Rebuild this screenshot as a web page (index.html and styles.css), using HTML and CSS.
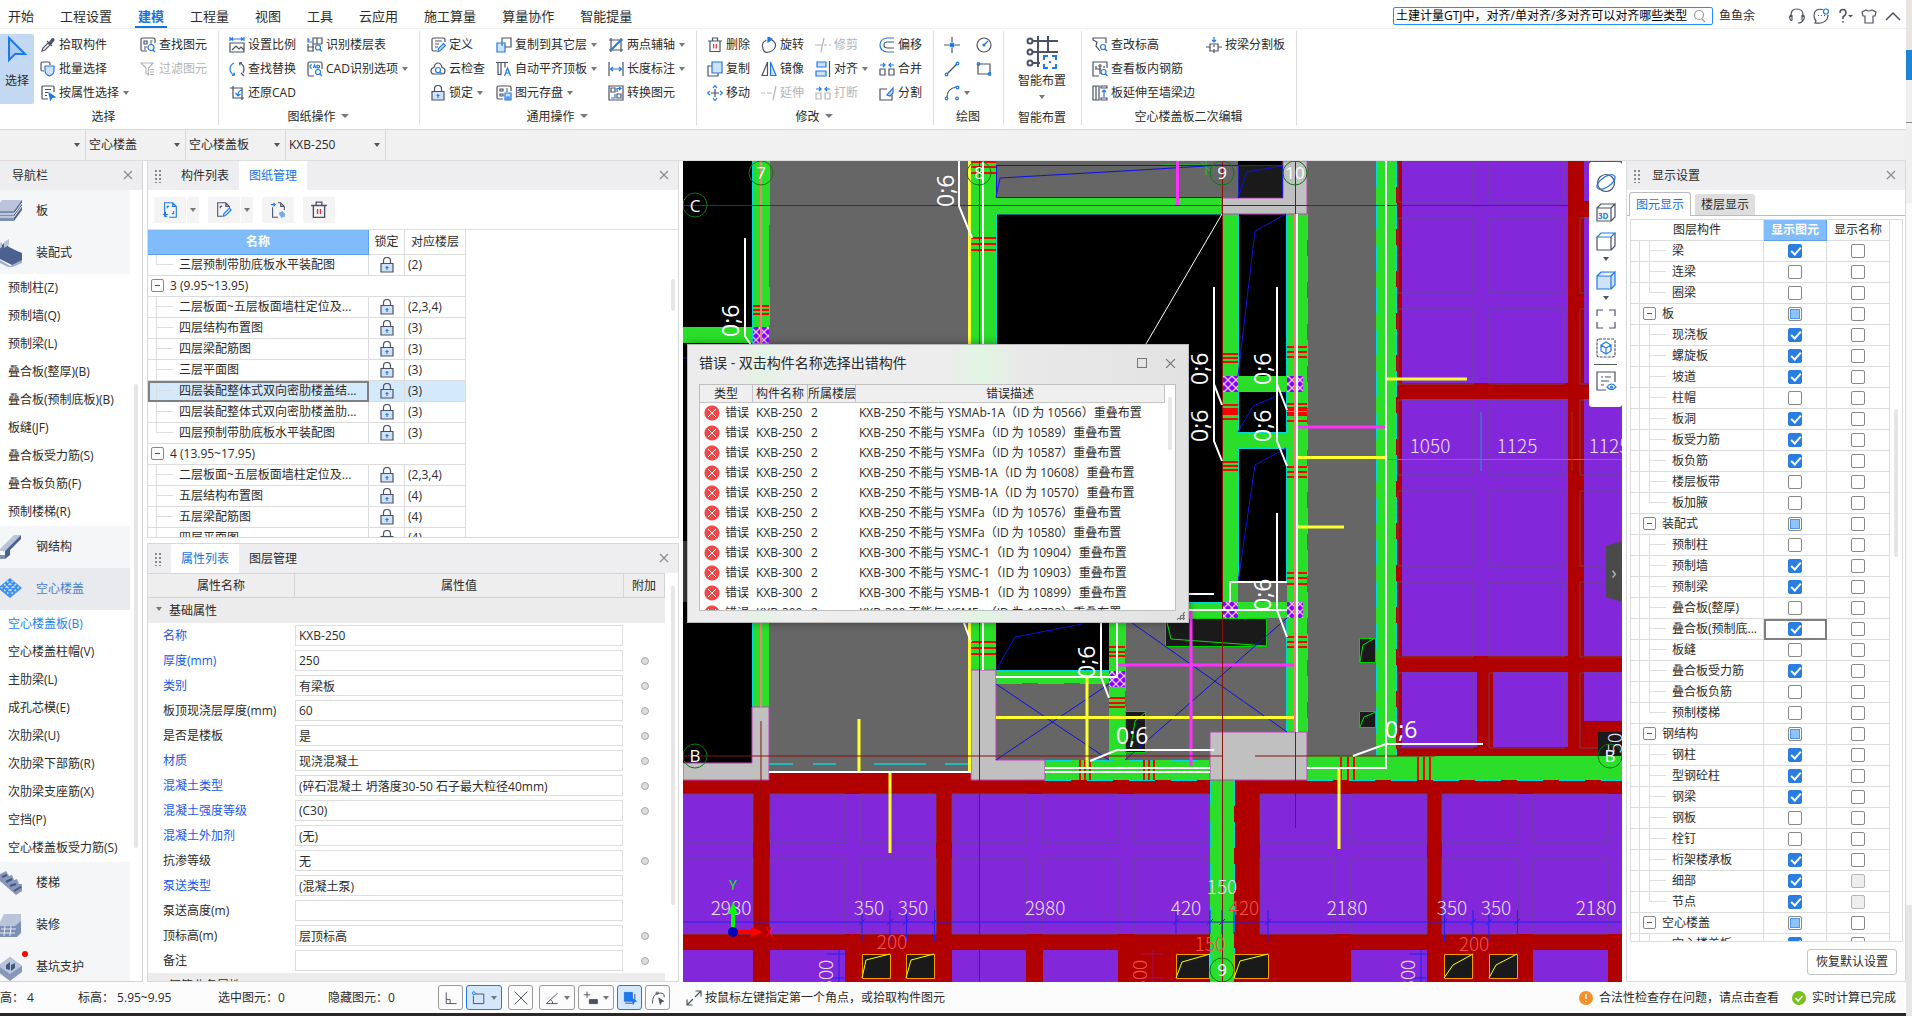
FILE: index.html
```html
<!DOCTYPE html>
<html lang="zh-CN">
<head>
<meta charset="utf-8">
<title>建模</title>
<link rel="stylesheet" href="styles.css">
</head>
<body>
<svg class="defs" aria-hidden="true">
<symbol id="pick" viewBox="0 0 16 16"><path d="M2 14l1-3 5-5 2 2-5 5z"/><path d="M7 4l5 5M9 6l3-4q2-1 2 1l-3 4z" fill="#4b5266"/></symbol>
<symbol id="batch" viewBox="0 0 16 16"><path d="M4 10H2.500Q1 10 1 8.500v-6Q1 1 2.500 1h6Q10 1 10 2.500V4"/><path class="f" d="M5 5h9v5q0 3-4.500 5Q5 13 5 10z"/></symbol>
<symbol id="attr" viewBox="0 0 16 16"><path d="M8 14H3q-1 0-1-1V2q0-1 1-1h10q1 0 1 1v5M5 4.500h6M5 7.500h3M5 10.500h2"/><path class="s" d="M9 8l6 4-3 .500L10.500 15z"/></symbol>
<symbol id="find" viewBox="0 0 16 16"><path d="M7 14H2.500Q1 14 1 12.500v-10Q1 1 2.500 1h11Q15 1 15 2.500V6M4 4h3v3H4zM10 4h2.500M10 6h2M4 10h3M4 12h2"/><circle class="b" cx="11" cy="10.500" r="3"/><path class="b" d="M13 13l2 2"/></symbol>
<symbol id="filter" viewBox="0 0 16 16"><path d="M1 2h12L8.500 7v7L6 12V7zM10 8.500h4M10 11h4M10 13.500h4"/></symbol>
<symbol id="scale" viewBox="0 0 16 16"><path d="M1 6h14v9H1zM3 13l4-4 3 3 2-2 3 3"/><path class="b" d="M1 0v4M15 0v4M2 2h12M4 .500L2 2l2 1.500M12 .500L14 2l-2 1.500"/></symbol>
<symbol id="floors" viewBox="0 0 16 16"><path d="M6 3V1h9v6M6 3v4h9M1 7v7h6M1 10h6M6 7v7M10 1v6"/><path class="b" d="M1 1v4h4M1 3h2"/><circle class="b" cx="11" cy="10.500" r="2.500"/><path class="b" d="M13 12.500l2 2"/></symbol>
<symbol id="swap" viewBox="0 0 16 16"><path class="b" d="M5 14Q1 12 1 8t4-6M3 14.500l2.500-.500L5 11.500"/><path d="M11 2q4 2 4 6 0 2-1 4M13 1.500L10.500 2l.500 2.500M12 12l3 3"/></symbol>
<symbol id="cad" viewBox="0 0 16 16"><path d="M7 15H2.500Q1 15 1 13.500v-11Q1 1 2.500 1h11Q15 1 15 2.500V8"/><path class="b" d="M5 4Q3 3.500 3 5.500T5 7M6.500 7l1-3 1.200 3M10 4v3q3 0 2.500-1.500Q12.500 4 10 4"/><circle class="b" cx="11" cy="11" r="2.500"/><path class="b" d="M13 13l2 2"/></symbol>
<symbol id="restore" viewBox="0 0 16 16"><path d="M1 3h12v12M4 1v12h11"/><path class="b" d="M14 5q-5 0-5 5M6.500 8L9 11l2.500-2"/></symbol>
<symbol id="define" viewBox="0 0 16 16"><path d="M7 14H3.500Q2 14 2 12.500v-10Q2 1 3.500 1h10Q15 1 15 2.500V5M5 4h7M5 7h4M5 10h3"/><path class="f" d="M8 14.500l.500-3 5-5 2 2-5 5z"/></symbol>
<symbol id="cloud" viewBox="0 0 16 16"><path d="M4 13Q1 13 1 10t3-3.500Q5 2 8 2t4 4.500q3 .500 3 3.500t-3 3z"/><circle class="b" cx="8" cy="9" r="2.500"/><path class="b" d="M10 11l1.500 1.500"/></symbol>
<symbol id="lock" viewBox="0 0 16 16"><path class="l" d="M2 6.500h12v8.500H2z"/><path d="M4.500 6.500V4q0-3.500 3.500-3.500t3.500 3.500v2.500"/><path class="b" d="M8 13V9M6.500 10.500h3"/></symbol>
<symbol id="copyfloor" viewBox="0 0 16 16"><path class="f" d="M1 6h8v9H1z"/><path d="M6 5V1h9v9H9"/><path class="b" d="M6 5v4"/></symbol>
<symbol id="align" viewBox="0 0 16 16"><path d="M0 1.500h12M2 1.500v12h3v-12M9 1.500v5"/><path class="b" d="M8.500 15l3-8 3 8M9.500 12h4"/></symbol>
<symbol id="save" viewBox="0 0 16 16"><path d="M7 14H2.500Q1 14 1 12.500v-10Q1 1 2.500 1h11Q15 1 15 2.500V6M4 4h3v2H4zM10 4h2M10 6h2M4 9h3v2H4z"/><path class="f" d="M9 8h6v7H9zM11 15v-3h2v3"/></symbol>
<symbol id="axis2" viewBox="0 0 16 16"><path d="M1 3h14M1 13h14M3 1v14M13 1v14"/><path class="b" d="M2.500 13.500L13.500 2.500" stroke-width="2"/></symbol>
<symbol id="length" viewBox="0 0 16 16"><path d="M1 1v14M15 1v14"/><path class="b" d="M2 8h12M5 6L2.500 8 5 10M11 6l2.500 2L11 10"/></symbol>
<symbol id="convert" viewBox="0 0 16 16"><path d="M1 1h14v14H1zM3 3h4v4H3zM9 9h4v4H9z"/><path class="b" d="M9 7V3.500h4M7 9v4H3M11 2l2 1.500L11 5"/></symbol>
<symbol id="trash" viewBox="0 0 16 16"><path d="M1 4h14M3 4v10.500h10V4M5.500 4V1h5v3"/><path d="M6.700 7v4.500M9.300 7v4.500" stroke="#d33"/></symbol>
<symbol id="rotate" viewBox="0 0 16 16"><path d="M10.500 3Q15 5 14.500 9T8 15 1.500 9Q1 5 5.500 3"/><path class="s" d="M7 0l4 2-4 3z"/></symbol>
<symbol id="trim" viewBox="0 0 16 16"><path d="M0 8h7M9 8h3M14 8h2M9 1L6 15"/></symbol>
<symbol id="offset" viewBox="0 0 16 16"><path class="b" d="M15 1H8Q1 2 1 8t7 7h7"/><path d="M15 5H8.500Q5 5 5 8t3.500 3H15"/></symbol>
<symbol id="copy" viewBox="0 0 16 16"><path d="M5 5H1v10h10v-3"/><path class="f" d="M5 1h10v11H5z"/></symbol>
<symbol id="mirror" viewBox="0 0 16 16"><path d="M6.500 1v13.500H1z"/><path class="f" d="M9.500 1v13.500H15z"/></symbol>
<symbol id="alignr" viewBox="0 0 16 16"><path class="f" d="M2 1h9v5H2zM1 10h10v5H1z"/><path d="M14.500 0v16"/></symbol>
<symbol id="merge" viewBox="0 0 16 16"><path d="M1 8h5v6H1zM10 8h5v6h-5z"/><path class="b" d="M1 4h5M4 2l2 2-2 2M15 4h-5M12 2l-2 2 2 2"/></symbol>
<symbol id="move" viewBox="0 0 16 16"><path d="M8 4v8M4 8h8"/><path class="b" d="M6 3l2-2.500L10 3M6 13l2 2.500 2-2.500M3 6L.500 8 3 10M13 6l2.500 2L13 10"/></symbol>
<symbol id="extend" viewBox="0 0 16 16"><path d="M0 8h4M6 8h5M15 1l-3 14"/></symbol>
<symbol id="split" viewBox="0 0 16 16"><path d="M8 4H1v11h12v-5"/><path class="f" d="M8 10l6-7v5l-3 3z"/></symbol>
<symbol id="point" viewBox="0 0 16 16"><path d="M8 0v5M8 11v5M0 8h5M11 8h5"/><circle class="s" cx="8" cy="8" r="2"/></symbol>
<symbol id="circle" viewBox="0 0 16 16"><circle cx="8" cy="8" r="7"/><path class="b" d="M8 8l4-4"/><circle class="s" cx="8" cy="8" r="1"/></symbol>
<symbol id="line" viewBox="0 0 16 16"><path d="M3 13L13 3"/><circle class="b" cx="2.500" cy="13.500" r="1.300"/><circle class="b" cx="13.500" cy="2.500" r="1.300"/></symbol>
<symbol id="rect" viewBox="0 0 16 16"><path d="M2 3h12v10H2z"/><circle class="b" cx="2.500" cy="3" r="1.300"/><circle class="b" cx="13.500" cy="13" r="1.300"/></symbol>
<symbol id="arc" viewBox="0 0 16 16"><path d="M3 12Q3 4 12 2"/><circle class="b" cx="2.500" cy="13.500" r="1.300"/><circle class="b" cx="13.500" cy="2.500" r="1.300"/><circle class="b" cx="13" cy="13.500" r="1.300"/></symbol>
<symbol id="elev" viewBox="0 0 16 16"><path d="M8 14L4 9 5 5 1 3V1h13v5"/><circle class="b" cx="11" cy="10" r="2.500"/><path class="b" d="M13 12l2 2"/></symbol>
<symbol id="rebar" viewBox="0 0 16 16"><path d="M7 15H1V1h14v6M8 3v10M3 8h6M4 5v3M12 5v2M6 5h4"/><circle class="b" cx="11.500" cy="11" r="2.500"/><path class="b" d="M13.500 13l2 2"/></symbol>
<symbol id="wall" viewBox="0 0 16 16"><path d="M1 1h3v14H1zM4 1h3v14H4zM9 1h6v2H9zM9 13h6v2H9z"/><path class="b" d="M12 12V5M10 7l2-2 2 2"/></symbol>
<symbol id="beamcut" viewBox="0 0 16 16"><path d="M4 7h8v7H4zM0 10h4M12 10h4M8 8v2M8 12v4"/><path class="b" d="M8 0v5M6 3l2 2 2-2"/></symbol>
<symbol id="file1" viewBox="0 0 20 20"><path class="b" d="M7 17H4V2h9l4 4v12H9M13 2v4h4"/><path class="b" d="M7 8V6h2M12 6h2M14 11v3h-2M5 12v6M2 15h6"/></symbol>
<symbol id="file2" viewBox="0 0 20 20"><path d="M8 17H3V2h9l4 4v2M12 2v4h4M6 8V6h2"/><path class="f" d="M9 17l1-3 6-6 2 2-6 6z"/></symbol>
<symbol id="file3" viewBox="0 0 20 20"><path d="M4 7v11h6M10 2h3l4 4v4M13 2v4h4"/><path class="b" d="M2 4h5M5 2l2 2-2 2"/><path class="s" d="M12 13l3-1 2 2v3l-3 1-2-3z" opacity=".6"/></symbol>
<symbol id="close" viewBox="0 0 10 10"><path d="M1 1l8 8M9 1L1 9"/></symbol>
<symbol id="cube" viewBox="0 0 20 20"><path class="k" d="M1 6h14v13H1zM15 6l4-4v13l-4 4M1 6l4-4h14"/></symbol>
</svg>

<div class="app">
<header class="menubar">
<nav class="menus"><a href="#">开始</a><a href="#">工程设置</a><a href="#" class="on">建模</a><a href="#">工程量</a><a href="#">视图</a><a href="#">工具</a><a href="#">云应用</a><a href="#">施工算量</a><a href="#">算量协作</a><a href="#">智能提量</a></nav>
<div class="search"><input type="text" aria-label="搜索" value="土建计量GTJ中，对齐/单对齐/多对齐可以对齐哪些类型"><svg class="i grey" viewBox="0 0 16 16"><circle cx="7" cy="7" r="4.500"/><path d="M10 11l3 3"/></svg></div>
<a href="#" class="user">鱼鱼余</a>
<div class="tools">
<button aria-label="客服"><svg class="i" viewBox="0 0 16 16"><path d="M2 9V7q0-6 6-6t6 6v2M2 7q-2 1-1 4 1 2 2 1V7M14 7q2 1 1 4-1 2-2 1V7M14 12q-1 3-5 3"/></svg></button>
<button aria-label="消息"><svg class="i" viewBox="0 0 16 16"><path d="M10 1.500Q1 0 1 7.500 1 11 3 13l-1 2q9 1 12-4 1-2 1-4M5 7.500h1M8 7.500h1M11 7.500h1"/><circle class="b" cx="13" cy="3.500" r="2.500"/></svg></button>
<button aria-label="帮助"><svg class="i" viewBox="0 0 16 16"><path d="M3 5q0-3.500 3-3.500T9 5Q9 7 6 9v2M6 13v1.500" stroke-width="1.600"/><path d="M11 7h5l-2.500 2.500z" fill="#4b5266" stroke="none"/></svg></button>
<button aria-label="皮肤"><svg class="i" viewBox="0 0 16 16"><path d="M5 2q3 2 6 0l4 2-1 4h-2v7H4V8H2L1 4z"/></svg></button>
<button aria-label="收起"><svg class="i" viewBox="0 0 16 16"><path d="M1 12l7-7 7 7" stroke-width="1.500"/></svg></button>
</div>
</header>

<section class="ribbon">
<div class="group first"><div class="cols"><button class="big on"><svg viewBox="0 0 24 28"><path d="M4 2v22l6-6h10z" fill="#a9cbf4" stroke="#1f78e8" stroke-width="2"/></svg>选择</button>
<div class="col"><button><svg class="i"><use href="#pick"/></svg>拾取构件</button><button><svg class="i"><use href="#batch"/></svg>批量选择</button><button><svg class="i"><use href="#attr"/></svg>按属性选择<i class="dd"></i></button></div>
<div class="col"><button><svg class="i"><use href="#find"/></svg>查找图元</button><button class="off"><svg class="i"><use href="#filter"/></svg>过滤图元</button></div></div><h2>选择</h2></div>
<div class="group"><div class="cols">
<div class="col"><button><svg class="i"><use href="#scale"/></svg>设置比例</button><button><svg class="i"><use href="#swap"/></svg>查找替换</button><button><svg class="i"><use href="#restore"/></svg>还原CAD</button></div>
<div class="col"><button><svg class="i"><use href="#floors"/></svg>识别楼层表</button><button><svg class="i"><use href="#cad"/></svg>CAD识别选项<i class="dd"></i></button></div></div><h2>图纸操作<i class="dd"></i></h2></div>
<div class="group"><div class="cols">
<div class="col"><button><svg class="i"><use href="#define"/></svg>定义</button><button><svg class="i"><use href="#cloud"/></svg>云检查</button><button><svg class="i"><use href="#lock"/></svg>锁定<i class="dd"></i></button></div>
<div class="col"><button><svg class="i"><use href="#copyfloor"/></svg>复制到其它层<i class="dd"></i></button><button><svg class="i"><use href="#align"/></svg>自动平齐顶板<i class="dd"></i></button><button><svg class="i"><use href="#save"/></svg>图元存盘<i class="dd"></i></button></div>
<div class="col"><button><svg class="i"><use href="#axis2"/></svg>两点辅轴<i class="dd"></i></button><button><svg class="i"><use href="#length"/></svg>长度标注<i class="dd"></i></button><button><svg class="i"><use href="#convert"/></svg>转换图元</button></div></div><h2>通用操作<i class="dd"></i></h2></div>
<div class="group"><div class="cols">
<div class="col"><button><svg class="i"><use href="#trash"/></svg>删除</button><button><svg class="i"><use href="#copy"/></svg>复制</button><button><svg class="i"><use href="#move"/></svg>移动</button></div>
<div class="col"><button><svg class="i"><use href="#rotate"/></svg>旋转</button><button><svg class="i"><use href="#mirror"/></svg>镜像</button><button class="off"><svg class="i"><use href="#extend"/></svg>延伸</button></div>
<div class="col"><button class="off"><svg class="i"><use href="#trim"/></svg>修剪</button><button><svg class="i"><use href="#alignr"/></svg>对齐<i class="dd"></i></button><button class="off"><svg class="i"><use href="#merge"/></svg>打断</button></div>
<div class="col"><button><svg class="i"><use href="#offset"/></svg>偏移</button><button><svg class="i"><use href="#merge"/></svg>合并</button><button><svg class="i"><use href="#split"/></svg>分割</button></div></div><h2>修改<i class="dd"></i></h2></div>
<div class="group draw"><div class="cols">
<div class="col"><button aria-label="点"><svg class="i"><use href="#point"/></svg></button><button aria-label="直线"><svg class="i"><use href="#line"/></svg></button><button aria-label="弧"><svg class="i"><use href="#arc"/></svg><i class="dd"></i></button></div>
<div class="col"><button aria-label="圆"><svg class="i"><use href="#circle"/></svg></button><button aria-label="矩形"><svg class="i"><use href="#rect"/></svg></button></div></div><h2>绘图</h2></div>
<div class="group smart"><div class="cols"><button class="big"><svg viewBox="0 0 32 34"><g fill="none" stroke="#4b5266" stroke-width="2"><path d="M5 6h27M5 17h27M5 28h9M12 1v31M22 1v16"/><circle cx="4" cy="6" r="2.500" fill="#fff"/><circle cx="4" cy="17" r="2.500" fill="#fff"/><circle cx="4" cy="28" r="2.500" fill="#fff"/><path d="M18 25v-4h4m4 0h4v4m0 4v4h-4m-4 0h-4v-4M23 27h2" stroke="#1f78e8"/></g></svg>智能布置<i class="dd"></i></button></div><h2>智能布置</h2></div>
<div class="group"><div class="cols">
<div class="col"><button><svg class="i"><use href="#elev"/></svg>查改标高</button><button><svg class="i"><use href="#rebar"/></svg>查看板内钢筋</button><button><svg class="i"><use href="#wall"/></svg>板延伸至墙梁边</button></div>
<div class="col"><button><svg class="i"><use href="#beamcut"/></svg>按梁分割板</button></div></div><h2>空心楼盖板二次编辑</h2></div>
</section>

<section class="pickers">
<div class="pick short"><select aria-label="楼层"><option></option></select></div>
<div class="pick"><select aria-label="构件类别"><option>空心楼盖</option></select></div>
<div class="pick"><select aria-label="构件类型"><option>空心楼盖板</option></select></div>
<div class="pick"><select aria-label="构件"><option>KXB-250</option></select></div>
</section>

<main class="work">
<aside class="nav">
<div class="bar"><span class="ttl">导航栏</span><button class="x" aria-label="关闭导航栏"><svg class="i"><use href="#close"/></svg></button></div>
<div class="navlist">
<a href="#" class="cat"><svg viewBox="0 0 24 28"><path d="M-6 14L2 3h20l-8 11z" fill="#b9c3da"/><path d="M-6 14h20v10H-6z" fill="#7d8fb5"/><path d="M14 14l8-11v10l-8 11z" fill="#4c618f"/><path d="M-6 17h20l8-11M-6 20h20l8-11" fill="none" stroke="#fff"/></svg>板</a>
<a href="#" class="cat"><svg viewBox="0 0 24 28"><path d="M0 8l4-4 5 4 8 4 5 2v8l-8 5-14-7z" fill="#4c618f"/><path d="M-2 6l4-3v5l-4 3zM4 3l5-3v6l-5 3z" fill="#b9c3da"/><path d="M0 21l10 6 12-6v3l-12 5-10-5z" fill="#9fb0cf"/></svg>装配式</a>
<a href="#">预制柱(Z)</a><a href="#">预制墙(Q)</a><a href="#">预制梁(L)</a><a href="#">叠合板(整厚)(B)</a><a href="#">叠合板(预制底板)(B)</a><a href="#">板缝(JF)</a><a href="#">叠合板受力筋(S)</a><a href="#">叠合板负筋(F)</a><a href="#">预制楼梯(R)</a>
<a href="#" class="cat"><svg viewBox="0 0 24 28"><path d="M-2 18L14 2h7L5 18z" fill="#b9c3da"/><path d="M5 18L21 2v4L10 17v5l-5 4z" fill="#4c618f"/><path d="M-2 22h7v4h-7z" fill="#7d8fb5"/></svg>钢结构</a>
<a href="#" class="cat on"><svg viewBox="0 0 24 28"><path d="M10 3l12 10-12 10L-2 13z" fill="#3f8fee"/><path d="M4 9l9 8M7 6l9 8M1 12l9 8M16 9l-9 8M13 6l-9 8M19 12l-9 8" stroke="#bfe0ff" stroke-width="1.500" stroke-dasharray="2 2"/></svg>空心楼盖</a>
<a href="#" class="sel">空心楼盖板(B)</a><a href="#">空心楼盖柱帽(V)</a><a href="#">主肋梁(L)</a><a href="#">成孔芯模(E)</a><a href="#">次肋梁(U)</a><a href="#">次肋梁下部筋(R)</a><a href="#">次肋梁支座筋(X)</a><a href="#">空挡(P)</a><a href="#">空心楼盖板受力筋(S)</a>
<a href="#" class="cat"><svg viewBox="0 0 24 28"><path d="M0 5l6-3 3 5 3-1 2 5 3-1 2 5 3 0v7l-6 4L0 12z" fill="#8797ba"/><path d="M2 8l5-2M6 13l6-3M10 17l6-2M14 22l7-4" stroke="#44587f" stroke-width="2"/></svg>楼梯</a>
<a href="#" class="cat"><svg viewBox="0 0 24 28"><path d="M4 3h17v12H-2z" fill="#b9c3da"/><path d="M-2 15h17l6-5v12l-4 4H-2z" fill="#7d8fb5"/><path d="M1 18h15M0 22h15M5 15l-1 10M11 15l-1 10" stroke="#e6ebf5"/></svg>装修</a>
<a href="#" class="cat dot"><svg viewBox="0 0 24 28"><path d="M10 4l12 9v6l-12 9-12-9v-6z" fill="#8797ba"/><path d="M10 4l12 9-12 8-12-8z" fill="#b9c3da"/><path d="M6 16v-4l4-3v8zM11 18v-6l4-2v5z" fill="#44587f"/></svg>基坑支护</a>
<i class="thumb"></i></div>
</aside>

<div class="mid">
<section class="panel drawings">
<div class="bar"><i class="grip"></i><div class="tabs"><button>构件列表</button><button class="on">图纸管理</button></div><button class="x" aria-label="关闭"><svg class="i"><use href="#close"/></svg></button></div>
<div class="tbar"><span class="duo"><button aria-label="添加图纸"><svg class="i"><use href="#file1"/></svg></button><button class="a" aria-label="更多添加"><i class="dd"></i></button></span><span class="duo"><button aria-label="编辑图纸"><svg class="i"><use href="#file2"/></svg></button><button class="a" aria-label="更多编辑"><i class="dd"></i></button></span><button aria-label="定位图纸"><svg class="i"><use href="#file3"/></svg></button><button aria-label="删除图纸"><svg class="i"><use href="#trash"/></svg></button></div>
<div class="clip"><table class="grid dwg"><colgroup><col class="w221"><col class="w36"><col class="w61"></colgroup>
<thead><tr><th class="hot">名称</th><th>锁定</th><th>对应楼层</th></tr></thead><tbody>
<tr><td class="c last">三层预制带肋底板水平装配图</td><td class="k"><svg class="i"><use href="#lock"/></svg></td><td>(2)</td></tr>
<tr><td colspan="3" class="p"><i class="fold"></i>3 (9.95~13.95)</td></tr>
<tr><td class="c">二层板面~五层板面墙柱定位及...</td><td class="k"><svg class="i"><use href="#lock"/></svg></td><td>(2,3,4)</td></tr>
<tr><td class="c">四层结构布置图</td><td class="k"><svg class="i"><use href="#lock"/></svg></td><td>(3)</td></tr>
<tr><td class="c">四层梁配筋图</td><td class="k"><svg class="i"><use href="#lock"/></svg></td><td>(3)</td></tr>
<tr><td class="c">三层平面图</td><td class="k"><svg class="i"><use href="#lock"/></svg></td><td>(3)</td></tr>
<tr class="sel"><td class="c">四层装配整体式双向密肋楼盖结...</td><td class="k"><svg class="i"><use href="#lock"/></svg></td><td>(3)</td></tr>
<tr><td class="c">四层装配整体式双向密肋楼盖肋...</td><td class="k"><svg class="i"><use href="#lock"/></svg></td><td>(3)</td></tr>
<tr><td class="c last">四层预制带肋底板水平装配图</td><td class="k"><svg class="i"><use href="#lock"/></svg></td><td>(3)</td></tr>
<tr><td colspan="3" class="p"><i class="fold"></i>4 (13.95~17.95)</td></tr>
<tr><td class="c">二层板面~五层板面墙柱定位及...</td><td class="k"><svg class="i"><use href="#lock"/></svg></td><td>(2,3,4)</td></tr>
<tr><td class="c">五层结构布置图</td><td class="k"><svg class="i"><use href="#lock"/></svg></td><td>(4)</td></tr>
<tr><td class="c">五层梁配筋图</td><td class="k"><svg class="i"><use href="#lock"/></svg></td><td>(4)</td></tr>
<tr><td class="c">四层平面图</td><td class="k"><svg class="i"><use href="#lock"/></svg></td><td>(4)</td></tr>
</tbody></table><i class="thumb"></i></div>
</section>

<section class="panel props">
<div class="bar"><i class="grip"></i><div class="tabs"><button class="on">属性列表</button><button>图层管理</button></div><button class="x" aria-label="关闭"><svg class="i"><use href="#close"/></svg></button></div>
<div class="clip"><table class="prop"><colgroup><col class="w147"><col class="w329"><col class="w41"></colgroup>
<thead><tr><th>属性名称</th><th>属性值</th><th>附加</th></tr></thead><tbody>
<tr class="sec"><td colspan="3"><i class="dd"></i>基础属性</td></tr>
<tr><td class="b"><label for="p1">名称</label></td><td><input id="p1" value="KXB-250"></td><td></td></tr>
<tr><td class="b"><label for="p2">厚度(mm)</label></td><td><input id="p2" value="250"></td><td><i class="o"></i></td></tr>
<tr><td class="b"><label for="p3">类别</label></td><td><input id="p3" value="有梁板"></td><td><i class="o"></i></td></tr>
<tr><td><label for="p4">板顶现浇层厚度(mm)</label></td><td><input id="p4" value="60"></td><td><i class="o"></i></td></tr>
<tr><td><label for="p5">是否是楼板</label></td><td><input id="p5" value="是"></td><td><i class="o"></i></td></tr>
<tr><td class="b"><label for="p6">材质</label></td><td><input id="p6" value="现浇混凝土"></td><td><i class="o"></i></td></tr>
<tr><td class="b"><label for="p7">混凝土类型</label></td><td><input id="p7" value="(碎石混凝土 坍落度30-50 石子最大粒径40mm)"></td><td><i class="o"></i></td></tr>
<tr><td class="b"><label for="p8">混凝土强度等级</label></td><td><input id="p8" value="(C30)"></td><td><i class="o"></i></td></tr>
<tr><td class="b"><label for="p9">混凝土外加剂</label></td><td><input id="p9" value="(无)"></td><td></td></tr>
<tr><td><label for="p10">抗渗等级</label></td><td><input id="p10" value="无"></td><td><i class="o"></i></td></tr>
<tr><td class="b"><label for="p11">泵送类型</label></td><td><input id="p11" value="(混凝土泵)"></td><td></td></tr>
<tr><td><label for="p12">泵送高度(m)</label></td><td><input id="p12" value=""></td><td></td></tr>
<tr><td><label for="p13">顶标高(m)</label></td><td><input id="p13" value="层顶标高"></td><td><i class="o"></i></td></tr>
<tr><td><label for="p14">备注</label></td><td><input id="p14" value=""></td><td><i class="o"></i></td></tr>
<tr class="sec"><td colspan="3"><i class="dd"></i>钢筋业务属性</td></tr>
</tbody></table><i class="thumb"></i></div>
</section>
</div>

<section class="canvas">
<svg class="plan" viewBox="683 161 939 821" preserveAspectRatio="xMinYMin slice">
<defs><pattern id="hatch" width="8" height="8" patternUnits="userSpaceOnUse"><path d="M0 0h8v8H0z" fill="#8b00ff"/><path d="M0 0l8 8M8 0L0 8" stroke="#e3c8f5" stroke-width="1.300"/></pattern></defs>
<rect x="683" y="161" width="939" height="821"/>
<path fill="#666" d="M769 161h202v611H769zM996 161h242v37H996zM1307 161h69v595h-69zM996 683h113v77H996zM1125 618h162v142h-162zM1238 582h49v20h-49z"/>
<path fill="#3b3b3b" d="M683 541h6v61h-6z"/>
<path fill="#b00000" d="M683 780h939v202H683zM769 773h202v8H769zM1396 161h226v595h-226z"/>
<path fill="#8228da" d="M1402 161h166v222h-166zM1584 161h38v40h-38zM1584 217h38v166h-38zM1402 399h166v257h-166zM1584 399h38v257h-38zM1402 672h75v75h-75zM1493 672h75v75h-75zM1584 672h38v49h-38z
M683 794h70v140h-70zM770 794h166v140H770zM952 794h258v140H952zM1260 794h167v140h-167zM1442 794h180v140h-180zM683 950h70v32h-70zM770 950h75v32h-75zM952 950h74v32h-74zM1043 950h75v32h-75zM1351 950h76v32h-76zM1533 950h75v32h-75z"/>
<path class="cell" d="M1398 140h75v62h-75zM1489 140h75v62h-75zM1398 218h75v75h-75zM1489 218h75v75h-75zM1580 218h60v75h-60zM1398 309h75v75h-75zM1489 309h75v75h-75zM1580 309h60v75h-60zM1398 400h75v75h-75zM1489 400h75v75h-75zM1580 400h60v75h-60zM1398 491h75v75h-75zM1489 491h75v75h-75zM1580 491h60v75h-60zM1398 582h75v75h-75zM1489 582h75v75h-75zM1580 582h60v75h-60zM1398 673h75v75h-75zM1489 673h75v75h-75zM1580 673h60v75h-60z
M670 794h83v49h-83zM770 794h75v49h-75zM860 794h76v49h-76zM952 794h75v49h-75zM1042 794h76v49h-76zM1134 794h75v49h-75zM1260 794h75v49h-75zM1351 794h76v49h-76zM1442 794h76v49h-76zM1533 794h75v49h-75z
M670 858h83v76h-83zM770 858h75v76h-75zM860 858h76v76h-76zM952 858h75v76h-75zM1042 858h76v76h-76zM1134 858h75v76h-75zM1260 858h75v76h-75zM1351 858h76v76h-76zM1442 858h76v76h-76zM1533 858h75v76h-75z"/>
<g fill="#2ade2a"><path d="M752 161h17v546h-17zM683 327h70v16h-70zM971 161h25v509h-25zM996 198h226v16H996zM1222 214h16v388h-16zM1238 376h49v16h-49zM1238 432h49v16h-49zM1287 214h20v518h-20zM1376 161h20v595h-20zM1188 602h99v16h-99zM996 670h113v13H996zM1109 618h16v142h-16zM1045 760h165v20h-165zM1307 756h315v24h-315zM1210 780h24v202h-24z"/></g>
<path class="cy" d="M752.500 161v546M769.500 161v64M769.500 287v38M683 327.500h70M996.500 214v131M996 214h226M1238.500 214v162M1286.500 214v162M1238 391.500h49M1238.500 392v40M1286.500 392v40M1238 432.500h49M1238 448.500h49M1238.500 448v134M1286.500 448v134M1188 602.500h34M996 670.500h113M1286.500 618v114"/>
<path class="cy" stroke-dasharray="26 16" d="M971.500 161v184M1307.500 214v518M1376.500 161v595M1396.500 161v595M996 683.500h113M1109.500 683v77M1125.500 623v137M1045 760.500h165M1045 780.500h165M1307 780.500h315M1210.500 780v202M1234.500 780v202"/>
<path class="cy wide" d="M769 764h24M813 764h23M874 764h52M945 764h26"/>
<path fill="#c0c0c0" stroke="#c040c0" d="M1283 161h24v53h-85v-16h61zM752 707h17v73H683v-17h69zM971 670h25v90h49v20h-74zM1210 732h97v48h-97z"/>
<path class="dk" stroke="#2020c0" d="M1238.500 165.500h44v32h-44z"/>
<path class="dk" stroke="#00d000" d="M1165.500 618.500h101v28h-101zM1125.500 711.500h20v41h-20zM1359.500 638.500h16v24h-16zM1359.500 711.500h16v16h-16z"/>
<path class="dk" stroke="#f90" d="M862.500 954.500h28v24h-28zM906.500 954.500h28v24h-28zM1176.500 954.500h33v24h-33zM1234.500 954.500h34v24h-34zM1444.500 954.500h28v24h-28zM1489.500 954.500h28v24h-28z"/>
<path class="dk" stroke="none" d="M1598 732h24v24h-24z"/>
<g class="ln"><path stroke="#ff0" d="M862 978l4-18 24-6M906 978l5-18 23-6M1176 978l6-16 28-8M1234 978l6-17 28-7M1444 978l9-13 20-11M1489 978l7-13 21-11"/>
<path stroke="#00e000" d="M1166 618l5 21 96 7M1131 745l4-24 11-9M1360 662l3-17 12-7M1360 727l4-10 12-5M1200 166h14M1206 161v14M1201 162l9 9M1162 165h44"/>
<path stroke="#1010e0" d="M996 165.500h242M996.500 165v32.500H1222M996 197l4-19 140-8 82-5M1238 198l9-26 36-6M1286 214l-31 17-17 145M1286 392l-33 14-15 26M1286 448l-31 17-17 117M996 684l113 76M996 760l113-76M996 670l19-33 67-13M1125 618l162 114M1125 760l162-142M683 358h6"/>
<path stroke="#fff" d="M1222 214l-76 130"/></g>
<g fill="#f00"><path d="M971 161h25v2h-25zM971 166h25v2h-25zM971 172h25v2h-25zM971 237h25v2h-25zM971 243h25v2h-25zM971 249h25v2h-25zM971 641h25v2h-25zM971 647h25v2h-25zM971 653h25v2h-25zM753 305h16v2h-16zM753 309h16v2h-16zM753 313h16v2h-16z
M1222 353h16v2h-16zM1222 357h16v2h-16zM1222 361h16v2h-16zM1222 404h16v2h-16zM1222 408h16v7h-16zM1222 418h16v2h-16zM1222 461h16v2h-16zM1222 465h16v2h-16zM1222 469h16v2h-16z
M1287 346h20v2h-20zM1287 351h20v2h-20zM1287 356h20v2h-20zM1287 403h20v2h-20zM1287 407h20v4h-20zM1287 412h20v4h-20zM1287 420h20v2h-20zM1287 466h20v2h-20zM1287 471h20v2h-20zM1287 476h20v2h-20zM1287 572h20v2h-20zM1287 577h20v2h-20zM1287 583h20v2h-20zM1287 636h20v2h-20zM1287 641h20v2h-20zM1287 646h20v2h-20z
M1109 646h16v2h-16zM1109 651h16v2h-16zM1109 655h16v2h-16zM1109 697h16v2h-16zM1109 702h16v2h-16zM1109 706h16v2h-16z
M1079 760h2v20h-2zM1084 760h2v20h-2zM1089 760h2v20h-2zM1143 760h2v20h-2zM1148 760h2v20h-2zM1153 760h2v20h-2zM1340 757h2v23h-2zM1347 757h2v23h-2zM1353 757h2v23h-2zM1417 757h2v23h-2zM1423 757h2v23h-2zM1429 757h2v23h-2z"/></g>
<g fill="url(#hatch)"><path d="M753 327h16v16h-16zM1222 376h16v16h-16zM1287 376h16v16h-16zM1222 602h16v16h-16zM1287 602h16v16h-16zM1109 671h16v16h-16z"/></g>
<path class="yl" d="M969.500 161v611M859 719v53M890 773v80M1087 678v90M996 717.500h298M1339 769v80M1387 379h80M1298 457.500h88M1298 527h46"/>
<path class="mg" d="M1177.500 161v44M1298 427h88M1118 665h176M1191 610v156"/>
<path class="ln" stroke="#f08080" stroke-width="2" d="M761 161v546M1295 214v518"/>
<path class="ln" stroke="#8b1010" d="M683 205.500h913M683 756h540M1255 756h180M979.500 161v821M1222.500 161v821M1295.500 161v53M1295.500 732v96M761 721v107"/>
<path class="ln" stroke="#fff" stroke-width="2" d="M983 161v509M1297 214v518M1386 161v607h-79M769 772h202M959 161v45l13 32M745 238v98l6 9M1214 287v97l8 21M1214 384v57l8 20M1277 287v97l10 26M1277 384v57l10 25M1277 513v97l10 27M1287 582h-57v20M1188 594h26M1188 610h99M964 623l7 19M1101 623v54l8 21M996 677h121v-54M1090 761l27-11h97M1353 756l33-12h97M1045 768h165M1045 772h165"/>
<path class="ln" stroke="#18a0b8" d="M1388 459.500h234M1481 412v59"/>
<path class="ln" stroke="#98301a" d="M1572 412v59"/>
<path class="ln" stroke="#2020f0" d="M683 922h939M862 910v31M890 910v31M906.500 910v31M934.500 910v31M1176 910v24M1210 910v24M1222 910v24M1234 910v24M1268 910v31M1444.500 910v31M1473 910v31M1489 910v31M1517.500 910v31M839 950v32M827 954h18M827 978h18M1421 950v32M1409 954h18M1409 978h18M1173 925l6-6M1207 925l6-6M1219 925l6-6M1265 925l6-6M859 925l6-6M887 925l6-6M903 925l6-6M931 925l6-6M1441 925l6-6M1470 925l6-6M1486 925l6-6M1514 925l6-6"/>
<path class="ln" stroke="#a01060" d="M1153 950v32M1141 954h22M1141 978h22"/>
<g class="bub"><circle cx="761" cy="173" r="12"/><circle cx="979" cy="173" r="12"/><circle cx="1222" cy="173" r="12"/><circle cx="1295" cy="173" r="12"/><circle cx="695" cy="205" r="12"/><circle cx="695" cy="756" r="12"/><circle cx="1610" cy="756" r="12"/><circle cx="1222" cy="970" r="12"/></g>
<g class="bt"><text x="761" y="179">7</text><text x="979" y="179">8</text><text x="1222" y="179">9</text><text x="1295" y="179">10</text><text x="695" y="212">C</text><text x="695" y="762">B</text><text x="1610" y="762">B</text><text x="1222" y="976">9</text></g>
<g class="zs"><text transform="translate(954 207) rotate(-90)">0;6</text><text transform="translate(739 337) rotate(-90)">0;6</text><text transform="translate(1208 385) rotate(-90)">0;6</text><text transform="translate(1208 442) rotate(-90)">0;6</text><text transform="translate(1271 385) rotate(-90)">0;6</text><text transform="translate(1271 442) rotate(-90)">0;6</text><text transform="translate(1271 611) rotate(-90)">0;6</text><text transform="translate(1095 678) rotate(-90)">0;6</text><text x="1116" y="744">0;6</text><text x="1385" y="738">0;6</text></g>
<g class="dim"><text x="1430" y="453">1050</text><text x="1517" y="453">1125</text><text x="1609" y="453">1125</text><text x="731" y="915">2980</text><text x="869" y="915">350</text><text x="913" y="915">350</text><text x="1045" y="915">2980</text><text x="1186" y="915">420</text><text x="1347" y="915">2180</text><text x="1452" y="915">350</text><text x="1496" y="915">350</text><text x="1596" y="915">2180</text><text x="1222" y="894">150</text><text transform="translate(833 975) rotate(-90)">300</text><text transform="translate(1415 975) rotate(-90)">300</text><text transform="translate(1622 743) rotate(-90)">50</text>
<g class="r"><text x="1244" y="915">420</text><text x="1210" y="951">150</text><text x="892" y="949">200</text><text x="1474" y="951">200</text><text transform="translate(1147 975) rotate(-90)">300</text></g></g>
<path d="M731 930v-16h-3l5-12 5 12h-3v16z" fill="#0f0"/><path d="M735 930h16v-3l12 5-12 5v-3h-16z" fill="#f00"/><circle cx="733" cy="932" r="5" fill="#00b"/>
<text class="ax" x="733" y="890" fill="#0f0">Y</text><text class="ax" x="769" y="937" fill="#f00">X</text>
</svg>

<div class="views">
<button aria-label="动态观察"><svg class="i" viewBox="0 0 20 20"><circle cx="10" cy="10" r="8.500"/><ellipse class="b" cx="10" cy="9" rx="10.500" ry="5" transform="rotate(-35 10 9)"/></svg></button>
<button aria-label="三维"><svg class="i" viewBox="0 0 20 20"><path d="M1 6h14v13H1zM15 6l4-4v13l-4 4M1 6l4-4h14"/><text x="2" y="17">3D</text></svg></button>
<button aria-label="俯视"><svg class="i" viewBox="0 0 20 20"><path d="M1 6v13h14V6M15 19l4-4V2"/><path class="b" d="M1 6h14l4-4H5z"/></svg><i class="dd"></i></button>
<button aria-label="着色"><svg class="i blue"><use href="#cube"/></svg><i class="dd"></i></button>
<button aria-label="全屏"><svg class="i" viewBox="0 0 20 20"><path d="M1 7V1h6M13 1h6v6M19 13v6h-6M7 19H1v-6"/></svg></button>
<button aria-label="局部三维"><svg class="i" viewBox="0 0 20 20"><rect x="1" y="1" width="18" height="18" rx="2" stroke-dasharray="3 1"/><path class="b" d="M10 4l5 3v6l-5 3-5-3V7zM5 7l5 3 5-3M10 10v6"/></svg></button>
<hr>
<button aria-label="显示设置"><svg class="i" viewBox="0 0 20 20"><path d="M10 19H1V1h18v10M5 6h2M9 6h6M5 10h8M5 14h3"/><path class="b" d="M11 16q4.500-6 9 0-4.500 5-9 0z"/><circle class="b" cx="15.500" cy="16" r="1"/></svg></button>
</div>
<button class="pull" aria-label="展开">›</button>

<div class="dialog" role="dialog" aria-label="错误">
<div class="dt"><span>错误 - 双击构件名称选择出错构件</span><button aria-label="最大化"><i class="max"></i></button><button aria-label="关闭"><svg class="i"><use href="#close"/></svg></button></div>
<div class="dbody"><table class="err"><colgroup><col class="w53"><col class="w55"><col class="w48"><col class="w309"></colgroup>
<thead><tr><th>类型</th><th>构件名称</th><th>所属楼层</th><th>错误描述</th></tr></thead><tbody>
<tr><td>错误</td><td>KXB-250</td><td>2</td><td>KXB-250 不能与 YSMAb-1A（ID 为 10566）重叠布置</td></tr>
<tr><td>错误</td><td>KXB-250</td><td>2</td><td>KXB-250 不能与 YSMFa（ID 为 10589）重叠布置</td></tr>
<tr><td>错误</td><td>KXB-250</td><td>2</td><td>KXB-250 不能与 YSMFa（ID 为 10587）重叠布置</td></tr>
<tr><td>错误</td><td>KXB-250</td><td>2</td><td>KXB-250 不能与 YSMB-1A（ID 为 10608）重叠布置</td></tr>
<tr><td>错误</td><td>KXB-250</td><td>2</td><td>KXB-250 不能与 YSMB-1A（ID 为 10570）重叠布置</td></tr>
<tr><td>错误</td><td>KXB-250</td><td>2</td><td>KXB-250 不能与 YSMFa（ID 为 10576）重叠布置</td></tr>
<tr><td>错误</td><td>KXB-250</td><td>2</td><td>KXB-250 不能与 YSMFa（ID 为 10580）重叠布置</td></tr>
<tr><td>错误</td><td>KXB-300</td><td>2</td><td>KXB-300 不能与 YSMC-1（ID 为 10904）重叠布置</td></tr>
<tr><td>错误</td><td>KXB-300</td><td>2</td><td>KXB-300 不能与 YSMC-1（ID 为 10903）重叠布置</td></tr>
<tr><td>错误</td><td>KXB-300</td><td>2</td><td>KXB-300 不能与 YSMB-1（ID 为 10899）重叠布置</td></tr>
<tr><td>错误</td><td>KXB-300</td><td>2</td><td>KXB-300 不能与 YSMFa（ID 为 10733）重叠布置</td></tr>
</tbody></table><i class="thumb"></i></div>
<i class="resize"></i>
</div>
</section>

<aside class="panel display">
<div class="bar"><i class="grip"></i><span class="ttl">显示设置</span><button class="x" aria-label="关闭显示设置"><svg class="i"><use href="#close"/></svg></button></div>
<div class="dtabs"><button class="on">图元显示</button><button>楼层显示</button></div>
<div class="clip"><table class="grid disp"><colgroup><col class="w133"><col class="w63"><col class="w63"></colgroup>
<thead><tr><th>图层构件</th><th class="hot">显示图元</th><th>显示名称</th></tr></thead><tbody>
<tr><td class="c">梁</td><td><input type="checkbox" aria-label="显示梁" checked></td><td><input type="checkbox" aria-label="梁名称"></td></tr>
<tr><td class="c">连梁</td><td><input type="checkbox" aria-label="显示连梁"></td><td><input type="checkbox" aria-label="连梁名称"></td></tr>
<tr><td class="c last">圈梁</td><td><input type="checkbox" aria-label="显示圈梁"></td><td><input type="checkbox" aria-label="圈梁名称"></td></tr>
<tr><td class="p"><i class="fold"></i>板</td><td><input type="checkbox" class="part" aria-label="显示板"></td><td><input type="checkbox" aria-label="板名称"></td></tr>
<tr><td class="c">现浇板</td><td><input type="checkbox" aria-label="显示现浇板" checked></td><td><input type="checkbox" aria-label="现浇板名称"></td></tr>
<tr><td class="c">螺旋板</td><td><input type="checkbox" aria-label="显示螺旋板" checked></td><td><input type="checkbox" aria-label="螺旋板名称"></td></tr>
<tr><td class="c">坡道</td><td><input type="checkbox" aria-label="显示坡道" checked></td><td><input type="checkbox" aria-label="坡道名称"></td></tr>
<tr><td class="c">柱帽</td><td><input type="checkbox" aria-label="显示柱帽"></td><td><input type="checkbox" aria-label="柱帽名称"></td></tr>
<tr><td class="c">板洞</td><td><input type="checkbox" aria-label="显示板洞" checked></td><td><input type="checkbox" aria-label="板洞名称"></td></tr>
<tr><td class="c">板受力筋</td><td><input type="checkbox" aria-label="显示板受力筋" checked></td><td><input type="checkbox" aria-label="板受力筋名称"></td></tr>
<tr><td class="c">板负筋</td><td><input type="checkbox" aria-label="显示板负筋" checked></td><td><input type="checkbox" aria-label="板负筋名称"></td></tr>
<tr><td class="c">楼层板带</td><td><input type="checkbox" aria-label="显示楼层板带"></td><td><input type="checkbox" aria-label="楼层板带名称"></td></tr>
<tr><td class="c last">板加腋</td><td><input type="checkbox" aria-label="显示板加腋"></td><td><input type="checkbox" aria-label="板加腋名称"></td></tr>
<tr><td class="p"><i class="fold"></i>装配式</td><td><input type="checkbox" class="part" aria-label="显示装配式"></td><td><input type="checkbox" aria-label="装配式名称"></td></tr>
<tr><td class="c">预制柱</td><td><input type="checkbox" aria-label="显示预制柱"></td><td><input type="checkbox" aria-label="预制柱名称"></td></tr>
<tr><td class="c">预制墙</td><td><input type="checkbox" aria-label="显示预制墙" checked></td><td><input type="checkbox" aria-label="预制墙名称"></td></tr>
<tr><td class="c">预制梁</td><td><input type="checkbox" aria-label="显示预制梁" checked></td><td><input type="checkbox" aria-label="预制梁名称"></td></tr>
<tr><td class="c">叠合板(整厚)</td><td><input type="checkbox" aria-label="显示叠合板整厚"></td><td><input type="checkbox" aria-label="叠合板整厚名称"></td></tr>
<tr><td class="c">叠合板(预制底...</td><td class="focus"><input type="checkbox" aria-label="显示叠合板预制底板" checked></td><td><input type="checkbox" aria-label="叠合板预制底板名称"></td></tr>
<tr><td class="c">板缝</td><td><input type="checkbox" aria-label="显示板缝"></td><td><input type="checkbox" aria-label="板缝名称"></td></tr>
<tr><td class="c">叠合板受力筋</td><td><input type="checkbox" aria-label="显示叠合板受力筋" checked></td><td><input type="checkbox" aria-label="叠合板受力筋名称"></td></tr>
<tr><td class="c">叠合板负筋</td><td><input type="checkbox" aria-label="显示叠合板负筋"></td><td><input type="checkbox" aria-label="叠合板负筋名称"></td></tr>
<tr><td class="c last">预制楼梯</td><td><input type="checkbox" aria-label="显示预制楼梯"></td><td><input type="checkbox" aria-label="预制楼梯名称"></td></tr>
<tr><td class="p"><i class="fold"></i>钢结构</td><td><input type="checkbox" class="part" aria-label="显示钢结构"></td><td><input type="checkbox" aria-label="钢结构名称"></td></tr>
<tr><td class="c">钢柱</td><td><input type="checkbox" aria-label="显示钢柱" checked></td><td><input type="checkbox" aria-label="钢柱名称"></td></tr>
<tr><td class="c">型钢砼柱</td><td><input type="checkbox" aria-label="显示型钢砼柱" checked></td><td><input type="checkbox" aria-label="型钢砼柱名称"></td></tr>
<tr><td class="c">钢梁</td><td><input type="checkbox" aria-label="显示钢梁" checked></td><td><input type="checkbox" aria-label="钢梁名称"></td></tr>
<tr><td class="c">钢板</td><td><input type="checkbox" aria-label="显示钢板"></td><td><input type="checkbox" aria-label="钢板名称"></td></tr>
<tr><td class="c">栓钉</td><td><input type="checkbox" aria-label="显示栓钉"></td><td><input type="checkbox" aria-label="栓钉名称"></td></tr>
<tr><td class="c">桁架楼承板</td><td><input type="checkbox" aria-label="显示桁架楼承板" checked></td><td><input type="checkbox" aria-label="桁架楼承板名称"></td></tr>
<tr><td class="c">细部</td><td><input type="checkbox" aria-label="显示细部" checked></td><td><input type="checkbox" aria-label="细部名称" disabled></td></tr>
<tr><td class="c last">节点</td><td><input type="checkbox" aria-label="显示节点" checked></td><td><input type="checkbox" aria-label="节点名称" disabled></td></tr>
<tr><td class="p"><i class="fold"></i>空心楼盖</td><td><input type="checkbox" class="part" aria-label="显示空心楼盖"></td><td><input type="checkbox" aria-label="空心楼盖名称"></td></tr>
<tr><td class="c">空心楼盖板</td><td><input type="checkbox" aria-label="显示空心楼盖板" checked></td><td><input type="checkbox" aria-label="空心楼盖板名称"></td></tr>
</tbody></table><i class="thumb"></i></div>
<div class="foot"><button>恢复默认设置</button></div>
</aside>
</main>

<footer class="status">
<span class="s1">高： 4</span><span class="s2">标高： 5.95~9.95</span><span class="s3">选中图元：0</span><span class="s4">隐藏图元：0</span>
<div class="sb">
<button aria-label="正交"><svg class="i" viewBox="0 0 20 20"><path d="M4 3v14h13M4 12h5v5"/></svg></button>
<button class="wide on" aria-label="捕捉"><svg class="i" viewBox="0 0 20 20"><path d="M5 5h11v12H3V7"/><circle class="b" cx="3.500" cy="4" r="1.800"/></svg><i class="dd"></i></button>
<button class="sp" aria-label="交点"><svg class="i" viewBox="0 0 20 20"><path d="M2 2l16 16M18 2L2 18"/></svg></button>
<button class="wide sp" aria-label="角度"><svg class="i" viewBox="0 0 20 20"><path d="M17 4L3 17h14M8 12q3 2 3 5"/></svg><i class="dd"></i></button>
<button class="wide" aria-label="输入"><svg class="i" viewBox="0 0 20 20"><path d="M1 6h8M5 2v8"/><path d="M8 12h10v5H8z" fill="#4b5266"/></svg><i class="dd"></i></button>
<button class="on" aria-label="选择模式"><svg class="i" viewBox="0 0 20 20"><path class="s" d="M3 3h10v11H3z"/><path d="M4 16.500h9M16 5v8"/><path class="s" d="M12 10l6 4-3 1-1 3z"/></svg></button>
<button aria-label="曲线"><svg class="i" viewBox="0 0 20 20"><path d="M3 17Q3 5 11 4h4q3 0 3 5"/><circle cx="9" cy="4" r="1.500"/><path d="M11 10l6 4-3 1-1 3z" fill="#4b5266"/></svg></button>
</div>
<svg class="i ex" viewBox="0 0 16 16"><path d="M9.500 1H15v5.500M15 1L9 7M1 9.500V15h5.500M1 15l6-6"/></svg><span class="hint">按鼠标左键指定第一个角点，或拾取构件图元</span>
<a href="#" class="msg"><svg viewBox="0 0 14 14"><circle cx="7" cy="7" r="7" fill="#f7902c"/><path d="M7 3v5M7 10v1" stroke="#fff" stroke-width="1.500"/></svg>合法性检查存在问题，请点击查看</a>
<span class="msg"><svg viewBox="0 0 14 14"><circle cx="7" cy="7" r="7" fill="#76c11a"/><path d="M3.500 7l2.500 3 4.500-5" stroke="#fff" fill="none" stroke-width="1.500"/></svg>实时计算已完成</span>
</footer>
<div class="taskbar"></div>
</div>
<div class="edge"></div>
</body>
</html>
```
FILE: styles.css
```css
*{box-sizing:border-box}
body{margin:0;height:100vh;display:flex;overflow:hidden;background:#fff;color:#2b2b2b;font:12px/20px "Open Sans","Noto Sans CJK SC",sans-serif}
button,input,select{font:inherit;color:inherit;margin:0;padding:0;border:0;background:none;border-radius:0}
a{color:inherit;text-decoration:none}
h2{margin:0;font:inherit}
table{border-collapse:separate;border-spacing:0;table-layout:fixed}
td,th{padding:0;font-weight:400;white-space:nowrap}
i{font-style:normal}
.defs{position:absolute;width:0;height:0}
.i{width:16px;height:16px;flex:none;fill:none;stroke:#4b5266;stroke-width:1.2;overflow:visible}
.b{stroke:#1f78e8}
.f{stroke:#1f78e8;fill:#cfe2fa}
.l{fill:#cfe2fa}
.s{stroke:#1f78e8;fill:#1f78e8}
.grey{stroke:#999}
.dd{display:inline-block;flex:none;width:0;height:0;border:3px solid transparent;border-top:4px solid #777;border-bottom:0}
.app{flex:1;min-width:0;display:flex;flex-direction:column}
.edge{width:6px;background:linear-gradient(#e9e6df 50px,#1a86d9 50px 80px,#f0f0f0 80px 122px,#888 122px 123px,#f0f0f0 123px 203px,#fafafa 203px 905px,#e6e6e6 905px)}

.menubar{height:29px;flex:none;display:flex;align-items:center;padding:4px 5px 0 8px;border-bottom:1px solid #eee}
.menus{display:flex;gap:26px;font-size:13px;margin-right:auto}
.menus a{height:24px;line-height:24px}
.menus .on{color:#1673e6;font-weight:700;padding:0 3px;margin:0 -3px;border-bottom:2px solid #1673e6}
.search{display:flex;align-items:center;width:320px;height:18px;border:1px solid #1e90ff;border-radius:2px;color:#000}
.search input{flex:1;min-width:0;padding-left:2px;height:16px;outline:0}
.search .i{margin-right:4px}
.user{margin:0 34px 0 6px}
.tools{display:flex;gap:8px}
.tools button{width:16px;height:20px;display:flex;align-items:center}

.ribbon{height:101px;flex:none;display:flex;padding:2px 0 4px;border-bottom:1px solid #d9d9d9}
.group{display:flex;flex-direction:column;padding:0 11px 0 10px;border-right:1px solid #ddd}
.first{padding-left:0}
.cols{display:flex;gap:11px;height:75px;padding-top:2px}
.first .col:nth-child(2){margin-left:-5px}
.col button{display:flex;align-items:center;height:24px;white-space:nowrap;gap:3px}
.col .dd{margin-left:1px}
.off{color:#b5b5b5}
.off .i,.off .i *{stroke:#b5b5b5}
.group h2{text-align:center;line-height:20px;margin-top:2px}
.group h2 .dd{margin-left:6px;vertical-align:3px;border-width:4px 4px 0}
.big{display:flex;flex-direction:column;align-items:center;width:34px;height:70px;margin-top:1px}
.big.on{background:#c3d9f3;border-radius:0 2px 2px 0}
.big svg{width:24px;height:28px;margin:2px 0 7px}
.draw .cols{gap:6px}
.smart{width:78px}
.smart .big{width:56px;height:72px}
.smart .big svg{width:32px;height:34px;margin:1px 0 2px}
.smart .big .dd{margin-top:4px}

.pickers{height:31px;flex:none;display:flex;background:#f1f1f1;border-bottom:1px solid #ddd}
.pick{width:100px;display:flex;align-items:center;padding-right:5px;border-right:1px solid #d9d9d9}
.short{width:86px}
.pick select{appearance:none;flex:1;padding-left:3px;height:24px}
.pick::after{content:"";border:3px solid transparent;border-top:4px solid #555;border-bottom:0}

.work{flex:1;min-height:0;display:flex;background:#fff}
.bar{height:29px;flex:none;display:flex;align-items:center;background:#eeeef0}
.x{margin-left:auto;padding:0 9px;height:29px}
.x .i{width:10px;height:10px;stroke:#8a8a8a}
.grip{width:7px;height:14px;margin:0 10px 0 6px;background:radial-gradient(circle,#888 1px,transparent 1.5px) 0 0/4px 4px}
.nav{width:143px;flex:none;display:flex;flex-direction:column;border-right:1px solid #d4d4d6;border-bottom:1px solid #d4d4d6}
.nav .ttl{padding-left:12px}
.navlist{flex:1;min-height:0;overflow:hidden;position:relative}
.navlist a{display:block;height:28px;line-height:28px;padding-left:8px;white-space:nowrap}
.navlist .cat{display:flex;align-items:center;height:42px;width:130px;padding:0;background:#f5f6f8;position:relative}
.cat svg{width:24px;height:28px;margin-right:12px}
.navlist .cat.on{background:#e8eaee;color:#4a7fd6}
.navlist .sel{color:#1684f8}
.dot::after{content:"";position:absolute;left:22px;top:5px;width:6px;height:6px;border-radius:3px;background:#f00}
.thumb{position:absolute;width:4px;border-radius:2px;background:#e6e6e6}
.navlist .thumb{right:4px;top:194px;height:464px}

.mid{width:532px;flex:none;margin-left:4px;display:flex;flex-direction:column;gap:5px}
.panel{display:flex;flex-direction:column;min-height:0;border:1px solid #d9d9d9;border-top:0}
.drawings{flex:377 1 0}
.props{flex:438 1 0;border-top:1px solid #d9d9d9}
.tabs{display:flex;height:29px}
.tabs button{padding:0 10px}
.tabs .on{background:#fff;color:#1673e6}
.tbar{height:40px;flex:none;display:flex;align-items:center;gap:9px;padding:0 6px;border-bottom:1px solid #ddd}
.tbar button{width:32px;height:26px;border-radius:2px;background:#f4f4f5;display:inline-flex;align-items:center;justify-content:center}
.duo{display:flex;gap:1px}
.tbar .a{width:12px}
.tbar .i{width:18px;height:18px}
.clip{flex:1;min-height:0;overflow:hidden;position:relative}
.drawings .thumb{right:3px;top:49px;height:32px}
.props .thumb{right:3px;top:13px;height:319px}
.w221{width:221px}.w36{width:36px}.w61{width:61px}.w147{width:147px}.w329{width:329px}.w41{width:41px}
.w53{width:53px}.w55{width:55px}.w48{width:48px}.w309{width:309px}.w133{width:133px}.w63{width:63px}
.grid td{height:21px;line-height:20px;border-right:1px solid #dcdcdc;border-bottom:1px solid #dcdcdc}
.grid th{border-right:1px solid #dcdcdc;border-bottom:1px solid #dcdcdc}
.grid .hot{background:#80bbfa;color:#fff;font-weight:700;border-color:#5f9fe6}
.dwg{width:318px}
.dwg th{height:25px}
.dwg td{padding-left:3px}
.dwg td.k{padding:0;text-align:center}
.k .i{display:block;margin:0 auto}
.dwg .c{padding-left:31px;background:linear-gradient(#ddd,#ddd) 8px 0/1px 100% no-repeat,linear-gradient(#ddd,#ddd) 8px 9px/17px 1px no-repeat}
.dwg .c.last{background-size:1px 9px,17px 1px}
.fold{display:inline-block;width:13px;height:13px;margin-right:6px;vertical-align:-2px;border:1px solid #888;border-radius:2px;background:linear-gradient(#555,#555) center/5px 1px no-repeat #fff}
.dwg .sel td{background-color:#d5e9fd}
.dwg .sel .c{outline:2px solid #7f7f7f;outline-offset:-2px}
.prop{width:517px}
.prop th{height:25px;background:#eee;border-right:1px solid #d4d4d4;border-bottom:1px solid #d4d4d4;border-top:1px solid #d4d4d4}
.prop td{height:25px;vertical-align:middle}
.prop td:first-child{padding-left:15px}
.prop .b{color:#1857f0}
.prop td:last-child{text-align:center}
.prop .o{display:inline-block;width:8px;height:8px;border:1px solid #aaa;border-radius:4px;background:#ddd}
.prop input{display:block;width:328px;height:21px;padding-left:3px;border:1px solid #ddd;background:#fff}
.prop .sec td{background:#ececec;text-align:left;padding-left:8px}
.sec .dd{margin-right:7px;vertical-align:4px}

.canvas{flex:1;min-width:0;margin-left:4px;position:relative;overflow:hidden;background:#000}
.plan{display:block;width:100%;height:100%}
.cell{fill:none;stroke:#5f5078;stroke-opacity:.75}
.cy{fill:none;stroke:#00d8d8}
.cy.wide{stroke:#20b8c0;stroke-width:2}
.dk{fill:#1a1a1a}
.ln{fill:none}
.yl{fill:none;stroke:#ffff30;stroke-width:3}
.mg{fill:none;stroke:#ff30ff;stroke-width:3}
.bub{fill:none;stroke:#0a7a0a}
.bt{fill:#fff;font-size:17px;text-anchor:middle}
.zs{fill:#fff;font-size:23px}
.dim{fill:#eadff8;font-family:"Noto Sans CJK SC",sans-serif;font-weight:300;font-size:19px;text-anchor:middle}
.dim .r{fill:#f05050}
.ax{font-size:14px;text-anchor:middle}
.views{position:absolute;right:0;top:1px;width:33px;height:245px;padding-top:8px;display:flex;flex-direction:column;align-items:center;gap:3px;background:#fff;border-radius:3px}
.views button{display:flex;flex-direction:column;align-items:center;padding:3px 0}
.views .i{width:20px;height:20px}
.views .dd{margin-top:6px;border-width:4px 3px 0;border-top-color:#4b5266}
.views .blue{stroke:#1f78e8;fill:#cfe2fa}
.views text{font:700 8px "Open Sans",sans-serif;fill:#1f78e8;stroke:none}
.views hr{width:23px;margin:0;border:0;border-top:1px solid #555}
.pull{position:absolute;right:0;top:380px;width:16px;height:61px;background:#4a4a4a;color:#bbb;font-size:18px;clip-path:polygon(0 8%,100% 0,100% 100%,0 92%)}
.dialog{position:absolute;left:4px;top:183px;width:502px;height:279px;padding:0 12px 11px 11px;display:flex;flex-direction:column;border:1px solid #bbb;background:linear-gradient(90deg,#ececec 50px,#e2f3e4 75px,#efefef 100px,#ececec 260px,#e0f5e2 295px,#e9e9e9 330px,#e2e2e2);box-shadow:0 0 8px rgba(0,0,0,.4)}
.dt{height:39px;flex:none;display:flex;align-items:center;gap:10px;padding-bottom:3px;font-size:14px}
.dt span{margin-right:auto}
.dt button{width:18px;height:20px;display:flex;align-items:center;justify-content:center}
.dt button:last-child{margin-right:-3px}
.dt .i{width:11px;height:11px;stroke:#777}
.max{width:10px;height:10px;border:1px solid #777}
.dbody{flex:1;min-height:0;overflow:hidden;position:relative;background:#fff;border:1px solid #bfbfbf}
.dbody .thumb{right:3px;top:12px;height:53px}
.err{width:465px}
.err th{height:18px;line-height:16px;background:#efefef;border-right:1px solid #c4c4c4;border-bottom:1px solid #c4c4c4}
.err td{height:20px;padding-left:3px;overflow:visible}
.err td:first-child{padding-left:25px;background:linear-gradient(45deg,transparent 46%,#fff 46% 54%,transparent 54%) 8px 6px/8px 8px no-repeat,linear-gradient(-45deg,transparent 46%,#fff 46% 54%,transparent 54%) 8px 6px/8px 8px no-repeat,radial-gradient(circle at 12px 10px,#f04848 7px,transparent 8px)}
.resize{position:absolute;right:3px;bottom:2px;width:9px;height:9px;background:radial-gradient(circle,#777 1px,transparent 1.5px) 0 0/3px 3px;clip-path:polygon(100% 0,100% 100%,0 100%)}

.display{width:280px;flex:none;margin-left:4px}
.display .grip{margin-right:12px}
.dtabs{height:26px;flex:none;display:flex;align-items:flex-end;gap:4px;padding-left:2px;border-bottom:1px solid #bbb}
.dtabs button{height:21px;padding:0 6px;background:#dedede;border-radius:3px 3px 0 0}
.dtabs .on{height:24px;margin-bottom:-1px;background:#fff;color:#1673e6;border:1px solid #bbb;border-bottom:0}
.display .clip{margin:3px 2px 0 3px;border:1px solid #dcdcdc}
.disp{width:259px}
.disp th{height:21px;line-height:20px}
.disp td{text-align:center;vertical-align:middle}
.disp td:first-child{text-align:left}
.disp .c{padding-left:41px;background:linear-gradient(#ddd,#ddd) 8px 0/1px 100% no-repeat,linear-gradient(#ddd,#ddd) 18px 0/1px 100% no-repeat,linear-gradient(#ddd,#ddd) 18px 9px/17px 1px no-repeat}
.disp .c.last{background-size:1px 100%,1px 9px,17px 1px}
.disp .p{padding-left:12px;background:linear-gradient(#ddd,#ddd) 8px 0/1px 100% no-repeat}
.disp .focus{outline:2px solid #7f7f7f;outline-offset:-2px}
.disp input{appearance:none;display:block;width:14px;height:14px;margin:0 auto;border:1px solid #888;border-radius:2px;background:#fff}
.disp input:checked{border-color:#2a7de1;background:#2a7de1}
.disp input:checked::before{content:"";display:block;width:4px;height:8px;margin:0 0 0 4px;border:solid #fff;border-width:0 2px 2px 0;transform:rotate(42deg)}
.disp .part{background:#8fc3fb;box-shadow:inset 0 0 0 1px #fff,inset 0 0 0 2px #4a96ee}
.disp input:disabled{background:#eee;border-color:#b5b5b5}
.display .thumb{right:4px;top:189px;height:148px}
.foot{height:39px;flex:none;display:flex;align-items:center;justify-content:flex-end;padding-right:8px}
.foot button{height:26px;padding:0 8px;border:1px solid #c4c4c4;border-radius:3px}

.status{height:31px;flex:none;display:flex;align-items:center;background:#fcfcfc;padding-right:10px;white-space:nowrap}
.s1{width:78px}.s2{width:140px}.s3{width:110px}.s4{width:110px}
.sb{display:flex;gap:3px;margin-right:16px}
.sb button{width:25px;height:25px;display:flex;align-items:center;justify-content:center;gap:4px;border:1px solid #999;border-radius:3px}
.sb .wide{width:36px}
.sb .sp{margin-left:3px}
.sb .on{background:#d5e7fb;border-color:#1f78e8}
.ex{margin-right:3px}
.hint{margin-right:auto}
.msg{display:flex;align-items:center;gap:6px;margin-left:13px}
.msg svg{width:14px;height:14px}
.taskbar{height:3px;flex:none;background:#2b2728}
```
